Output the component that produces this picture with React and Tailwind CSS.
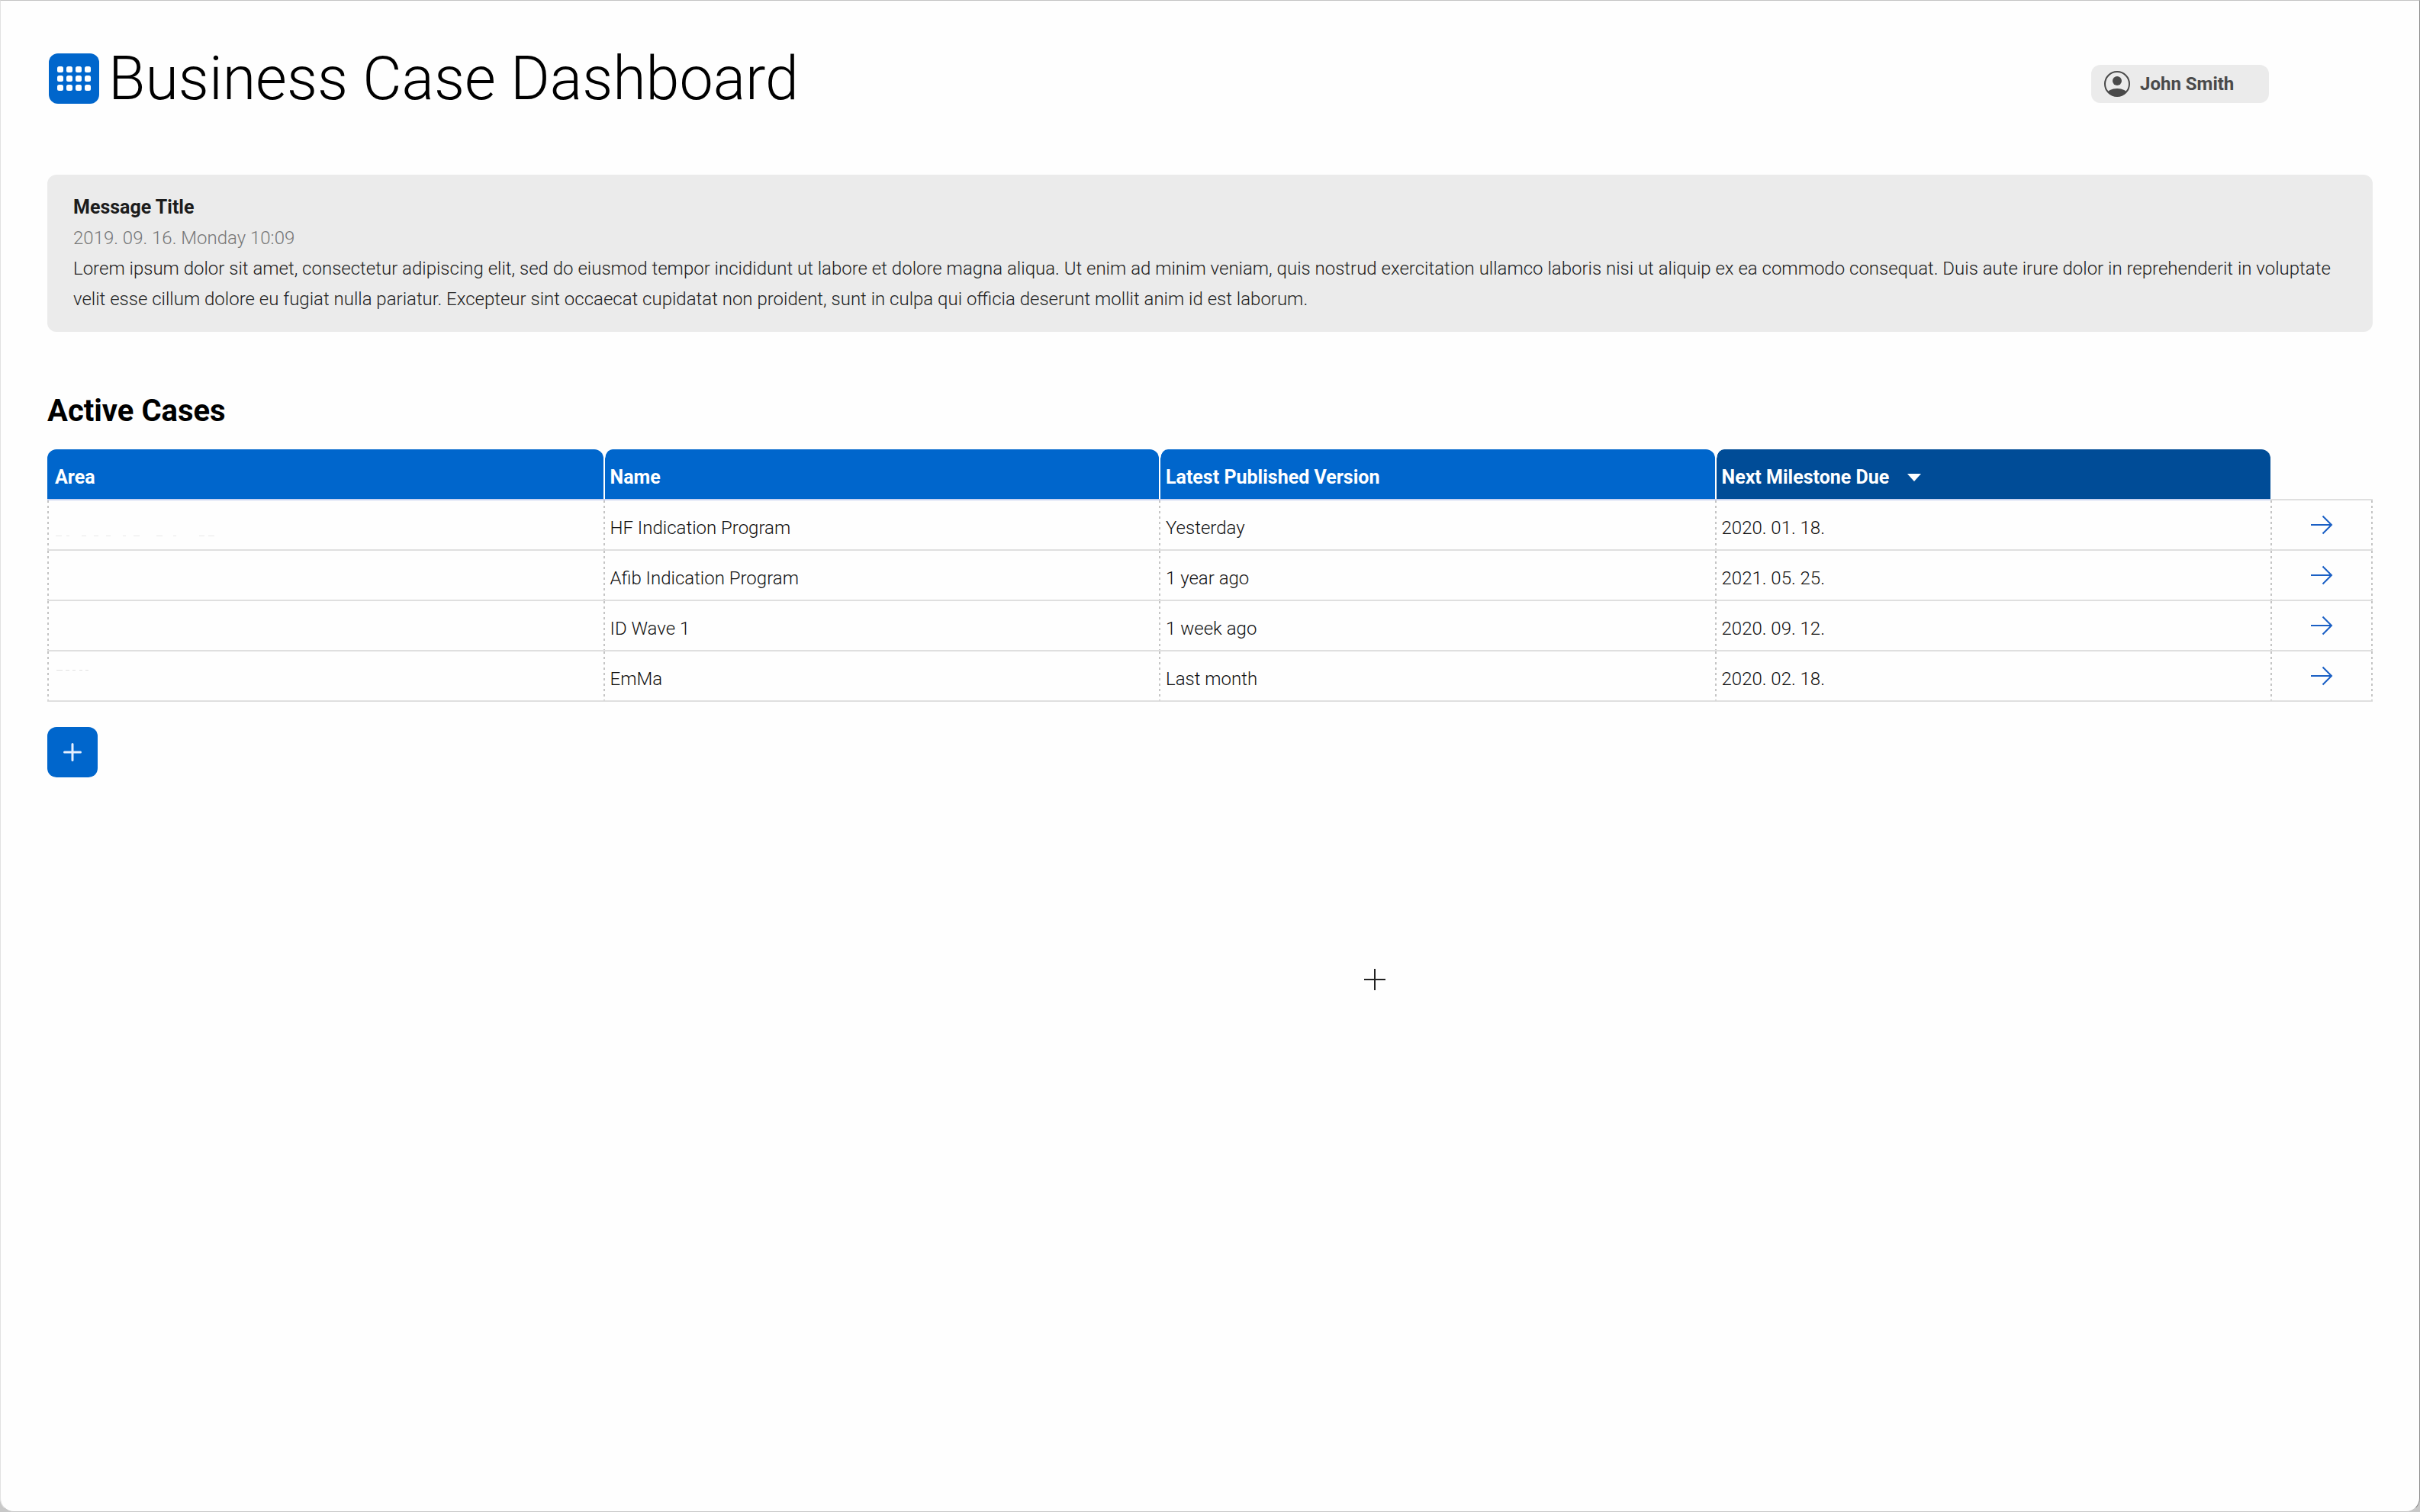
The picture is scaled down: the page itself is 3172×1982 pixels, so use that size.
import { useState } from "react";

const COLUMNS = ["Area", "Name", "Latest Published Version", "Next Milestone Due"];
const SORTED_COLUMN = "Next Milestone Due";

const CASES = [
  { area: "long", name: "HF Indication Program", version: "Yesterday", due: "2020. 01. 18." },
  { area: "", name: "Afib Indication Program", version: "1 year ago", due: "2021. 05. 25." },
  { area: "", name: "ID Wave 1", version: "1 week ago", due: "2020. 09. 12." },
  { area: "short", name: "EmMa", version: "Last month", due: "2020. 02. 18." },
];

const CELL =
  "h-[66px] border-b-2 border-[#dfdfdf] pl-[9px] pt-2 text-left align-middle bg-[repeating-linear-gradient(to_bottom,#c4c4c4_0_3px,transparent_3px_7px)] bg-[length:2px_100%] bg-left bg-no-repeat";

function AppIcon() {
  const dots = [];
  for (let row = 0; row < 3; row++) {
    for (let col = 0; col < 4; col++) {
      dots.push(
        <rect key={`${row}-${col}`} x={11 + col * 12} y={17 + row * 12} width="8" height="8" rx="2.5" />
      );
    }
  }
  return (
    <svg viewBox="0 0 66 66" className="size-[66px] shrink-0" aria-hidden="true">
      <rect width="66" height="66" rx="12" fill="#0066cc" />
      <g fill="#fff">{dots}</g>
    </svg>
  );
}

function UserIcon() {
  return (
    <svg viewBox="0 0 36 36" className="size-9 shrink-0" aria-hidden="true">
      <defs>
        <clipPath id="avatar">
          <circle cx="18" cy="18" r="16" />
        </clipPath>
      </defs>
      <circle cx="18" cy="18" r="16" fill="none" stroke="#4a4a4a" strokeWidth="2" />
      <circle cx="18" cy="14" r="6" fill="#4a4a4a" />
      <ellipse cx="18" cy="31" rx="13" ry="7" fill="#4a4a4a" clipPath="url(#avatar)" />
    </svg>
  );
}

function ArrowIcon() {
  return (
    <svg viewBox="0 0 30 26" className="h-[26px] w-[30px]" fill="none" stroke="#1a5fc4" strokeWidth="2" aria-hidden="true">
      <path d="M1 13H28M16.500 1.500L28 13L16.500 24.500" />
    </svg>
  );
}

function PlusIcon() {
  return (
    <svg viewBox="0 0 24 24" className="size-6" stroke="#e6f0ff" strokeWidth="3" strokeLinecap="round" aria-hidden="true">
      <path d="M12 1.500V22.500M1.500 12H22.500" />
    </svg>
  );
}

/* Faint residue of a hidden area name. */
function AreaTrace({ kind }) {
  if (kind === "long") {
    return (
      <svg viewBox="0 0 212 2" className="mt-5 h-[2px] w-[212px]" stroke="#e8e8e8" strokeWidth="1" aria-hidden="true">
        <path d="M2 1.500H10M16 1.500H20M36 1.500H42M52 1.500H58M68 1.500H74M90 1.500H94M104 1.500H112M134 1.500H142M156 1.500H160M190 1.500H197M202 1.500H210" />
      </svg>
    );
  }
  if (kind === "short") {
    return (
      <svg viewBox="0 0 50 2" className="mb-6 h-[2px] w-[50px]" stroke="#e0e0e0" strokeWidth="1" aria-hidden="true">
        <path d="M3 1.500H11M15 1.500H20M24 1.500H28M33 1.500H37M41 1.500H45" />
      </svg>
    );
  }
  return null;
}

function Header() {
  return (
    <header className="flex items-center justify-between">
      <div className="flex items-center gap-3 pl-[2px]">
        <AppIcon />
        <h1 className="text-[79px] leading-[66px] font-light text-black">Business Case Dashboard</h1>
      </div>
      <button
        type="button"
        className="mt-[14px] mr-[136px] flex h-[50px] w-[233px] items-center gap-3 rounded-xl bg-[#ebebeb] pl-4 text-2xl font-bold text-[#4a4a4a]"
      >
        <UserIcon />
        John Smith
      </button>
    </header>
  );
}

function Message() {
  return (
    <article className="mt-[93px] rounded-xl bg-[#ebebeb] px-[34px] py-[23px] text-2xl leading-[40px] text-[#222]">
      <h2 className="text-[25px] leading-[40px] font-bold text-[#1c1c1c]">Message Title</h2>
      <p className="font-light text-[#777]">2019. 09. 16. Monday 10:09</p>
      <p className="font-light">
        Lorem ipsum dolor sit amet, consectetur adipiscing elit, sed do eiusmod tempor incididunt ut
        labore et dolore magna aliqua. Ut enim ad minim veniam, quis nostrud exercitation ullamco
        laboris nisi ut aliquip ex ea commodo consequat. Duis aute irure dolor in reprehenderit in
        voluptate velit esse cillum dolore eu fugiat nulla pariatur. Excepteur sint occaecat cupidatat
        non proident, sunt in culpa qui officia deserunt mollit anim id est laborum.
      </p>
    </article>
  );
}

function CaseTable() {
  const [sorted, setSorted] = useState(SORTED_COLUMN);
  return (
    <table className="mt-[26px] w-full table-fixed border-separate border-spacing-0 text-2xl font-light text-[#111]">
      <colgroup>
        <col />
        <col />
        <col />
        <col />
        <col className="w-[134px]" />
      </colgroup>
      <thead>
        <tr>
          {COLUMNS.map((title, i) => (
            <th key={title} scope="col" className="border-b-2 border-[#c9d3f0] p-0">
              <button
                type="button"
                onClick={() => setSorted(title)}
                className={`flex h-[65px] w-full items-center gap-6 rounded-t-xl border-white pt-2 text-left text-[25px] font-bold text-white ${
                  i === 0 ? "pl-[10px]" : "border-l-2 pl-[7px]"
                } ${sorted === title ? "bg-[#004c97]" : "bg-[#0066cc]"} bg-clip-padding`}
              >
                {title}
                {sorted === title && (
                  <svg viewBox="0 0 18 10" className="h-[10px] w-[18px]" fill="#fff" aria-hidden="true">
                    <path d="M0 0H18L9 10Z" />
                  </svg>
                )}
              </button>
            </th>
          ))}
          <td className="border-b-2 border-[#dfdfdf]" />
        </tr>
      </thead>
      <tbody>
        {CASES.map((item) => (
          <tr key={item.name}>
            <td className={CELL}>
              <AreaTrace kind={item.area} />
            </td>
            <td className={CELL}>{item.name}</td>
            <td className={CELL}>{item.version}</td>
            <td className={CELL}>{item.due}</td>
            <td className="h-[66px] border-b-2 border-[#dfdfdf] bg-[repeating-linear-gradient(to_bottom,#c4c4c4_0_3px,transparent_3px_7px),repeating-linear-gradient(to_bottom,#c4c4c4_0_3px,transparent_3px_7px)] bg-[length:2px_100%] bg-[position:left_top,right_top] bg-no-repeat p-0">
              <a href="#case" aria-label={`Open ${item.name}`} className="flex items-center justify-center">
                <ArrowIcon />
              </a>
            </td>
          </tr>
        ))}
      </tbody>
    </table>
  );
}

export default function App() {
  return (
    <div className="min-h-screen bg-[#c8c8c8] font-[Roboto,'Liberation_Sans',sans-serif]">
      <main className="relative min-h-screen rounded-b-[18px] border border-t-[#c4c4c4] border-r-[#8c8c8c] border-b-[#c8c8c8] border-l-[#e2e2e2] bg-[#fefefe] px-[61px] pt-[69px]">
        <Header />
        <Message />
        <h2 className="mt-20 text-[40px] leading-[48px] font-bold text-black">Active Cases</h2>
        <CaseTable />
        <button
          type="button"
          aria-label="Add case"
          className="mt-[33px] flex size-[66px] items-center justify-center rounded-xl bg-[#0066cc]"
        >
          <PlusIcon />
        </button>
        {/* Crosshair pointer floating over the page */}
        <svg
          viewBox="0 0 28 28"
          className="pointer-events-none absolute top-[1269px] left-[1787px] size-7"
          stroke="#222"
          strokeWidth="2"
          aria-hidden="true"
        >
          <path d="M14 0V28M0 14H28" />
        </svg>
      </main>
    </div>
  );
}
